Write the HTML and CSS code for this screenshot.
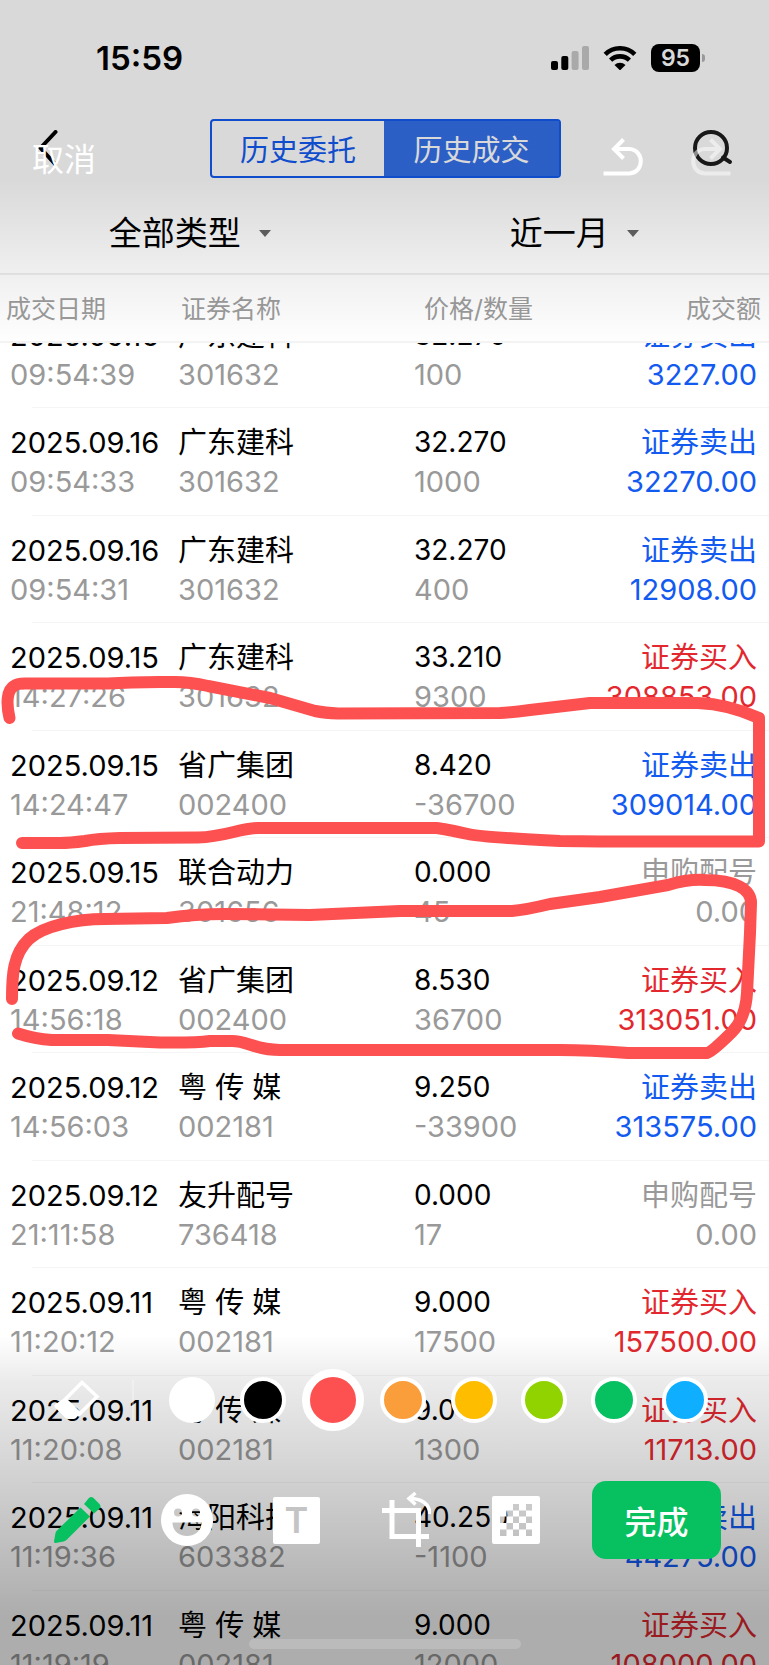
FILE: index.html
```html
<!DOCTYPE html>
<html lang="zh-CN">
<head>
<meta charset="utf-8">
<meta name="viewport" content="width=device-width, initial-scale=1">
<title>历史成交</title>
<link rel="stylesheet" href="styles.css">
</head>
<body>
<div class="screen">
  <main class="app">
    <div class="status">
      <span class="clock">15:59</span>
      <div class="status-icons">
        <svg width="38" height="24" viewBox="0 0 38 24" aria-hidden="true">
          <rect x="0" y="15" width="7" height="9" rx="2"/>
          <rect x="10.300" y="10" width="7" height="14" rx="2"/>
          <rect x="20.600" y="5" width="7" height="19" rx="2" fill="#000" fill-opacity=".22"/>
          <rect x="31" y="0" width="7" height="24" rx="2" fill="#000" fill-opacity=".22"/>
        </svg>
        <svg width="34" height="24" viewBox="0 0 34 24" aria-hidden="true">
          <g fill="none" stroke="#000" stroke-width="4.600">
            <path d="M2.200 8.400A21 21 0 0 1 31.800 8.400"/>
            <path d="M7.600 14.200A13.500 13.500 0 0 1 26.400 14.200"/>
          </g>
          <path d="M11.500 19A8 8 0 0 1 22.500 19L17 24.400Z"/>
        </svg>
        <span class="battery">95</span>
      </div>
    </div>

    <header class="nav">
      <button class="nav-btn" type="button" aria-label="返回">
        <svg width="20" height="36" viewBox="0 0 20 36"><path d="M17.500 2L2.500 18L17 34" fill="none" stroke="#000" stroke-width="4" stroke-linecap="round" stroke-linejoin="round"/></svg>
      </button>
      <div class="segment">
        <button type="button">历史委托</button>
        <button type="button" class="on">历史成交</button>
      </div>
      <button class="nav-btn" type="button" aria-label="搜索">
        <svg width="42" height="38" viewBox="0 0 42 38"><g fill="none" stroke="#1c1c1c" stroke-width="4"><circle cx="20" cy="19" r="16"/><path d="M32 28.500L39 33" stroke-linecap="round"/></g></svg>
      </button>
    </header>

    <div class="filters">
      <button type="button">全部类型<i class="caret"></i></button>
      <button type="button">近一月<i class="caret"></i></button>
    </div>

    <table class="deals">
      <thead><tr><th>成交日期</th><th>证券名称</th><th>价格/数量</th><th>成交额</th></tr></thead>
      <tbody>
        <tr><td>2025.09.16<small>09:54:39</small></td><td>广东建科<small>301632</small></td><td>32.270<small>100</small></td><td class="sell">证券卖出<b>3227.00</b></td></tr>
        <tr><td>2025.09.16<small>09:54:33</small></td><td>广东建科<small>301632</small></td><td>32.270<small>1000</small></td><td class="sell">证券卖出<b>32270.00</b></td></tr>
        <tr><td>2025.09.16<small>09:54:31</small></td><td>广东建科<small>301632</small></td><td>32.270<small>400</small></td><td class="sell">证券卖出<b>12908.00</b></td></tr>
        <tr><td>2025.09.15<small>14:27:26</small></td><td>广东建科<small>301632</small></td><td>33.210<small>9300</small></td><td class="buy">证券买入<b>308853.00</b></td></tr>
        <tr><td>2025.09.15<small>14:24:47</small></td><td>省广集团<small>002400</small></td><td>8.420<small>-36700</small></td><td class="sell">证券卖出<b>309014.00</b></td></tr>
        <tr><td>2025.09.15<small>21:48:12</small></td><td>联合动力<small>301656</small></td><td>0.000<small>45</small></td><td class="allot">申购配号<b>0.00</b></td></tr>
        <tr><td>2025.09.12<small>14:56:18</small></td><td>省广集团<small>002400</small></td><td>8.530<small>36700</small></td><td class="buy">证券买入<b>313051.00</b></td></tr>
        <tr><td>2025.09.12<small>14:56:03</small></td><td>粤 传 媒<small>002181</small></td><td>9.250<small>-33900</small></td><td class="sell">证券卖出<b>313575.00</b></td></tr>
        <tr><td>2025.09.12<small>21:11:58</small></td><td>友升配号<small>736418</small></td><td>0.000<small>17</small></td><td class="allot">申购配号<b>0.00</b></td></tr>
        <tr><td>2025.09.11<small>11:20:12</small></td><td>粤 传 媒<small>002181</small></td><td>9.000<small>17500</small></td><td class="buy">证券买入<b>157500.00</b></td></tr>
        <tr><td>2025.09.11<small>11:20:08</small></td><td>粤 传 媒<small>002181</small></td><td>9.010<small>1300</small></td><td class="buy">证券买入<b>11713.00</b></td></tr>
        <tr><td>2025.09.11<small>11:19:36</small></td><td>海阳科技<small>603382</small></td><td>40.250<small>-1100</small></td><td class="sell">证券卖出<b>44275.00</b></td></tr>
        <tr><td>2025.09.11<small>11:19:19</small></td><td>粤 传 媒<small>002181</small></td><td>9.000<small>12000</small></td><td class="buy">证券买入<b>108000.00</b></td></tr>
      </tbody>
    </table>
  </main>

  <svg class="marks" viewBox="0 0 769 1665" aria-hidden="true">
    <path d="M9.500 718C6 703 7 690 14 686Q17 683.500 25 683.500L108 683.500Q135 681.500 175 682Q190 682 208 686L270 698L315 711Q325 713 338 713.500L500 713Q512 712.500 530 710L590 703L698 703Q728 704 759 718L759 841.500L600 841.500L560 841Q480 837 468 834Q445 829 436 828L258 828C240 828 225 837 198 837.500L120 838Q98 838.500 85 841Q70 843 60 843L22 843"/>
    <path d="M12 999C12 975 13 954 29 939C43 926 76 919 105 919L167 918Q195 914 225 914L310 915L400 911L512 911Q525 910 550 904L600 897L668 885Q688 879 705 880C735 880 751 889 751 903L750 933L747 993C746 1010 740 1024 732 1032Q711 1053 707 1053L628 1053Q590 1050 560 1050L280 1050C255 1050 248 1041 232 1041L210 1041Q195 1043 160 1042.500L108 1040L52 1040Q35 1039 18 1033.500"/>
  </svg>

  <div class="editor">
    <div class="edit-top">
      <button class="cancel" type="button">取消</button>
      <button type="button" aria-label="撤销">
        <svg width="40" height="38" viewBox="0 0 40 38"><g fill="none" stroke="#fff" stroke-width="4"><path d="M20.500 1.500L11 11L20.500 20.500"/><path d="M12 11H26.500C41.500 12 41.500 34.500 26.500 35.500H.500"/></g></svg>
      </button>
      <button class="faded" type="button" aria-label="重做">
        <svg width="40" height="38" viewBox="0 0 40 38"><g fill="none" stroke="#fff" stroke-width="4"><path d="M19.500 1.500L29 11L19.500 20.500"/><path d="M28 11H13.500C-1.500 12 -1.500 34.500 13.500 35.500H39.500"/></g></svg>
      </button>
    </div>

    <div class="edit-bottom">
      <div class="palette">
        <button class="eraser" type="button" aria-label="橡皮擦">
          <svg width="46" height="40" viewBox="0 0 46 40"><path d="M28 2.500L43 16.500L25 34.500L10 20.500Z" fill="none" stroke="#fff" stroke-width="3.500"/><path d="M11.500 17.500L27 32.500L22 38Q21 39 19.500 39H14Q12.500 39 11.500 38L1 27.500Q0 26 1 24.500Z" fill="#fff"/></svg>
        </button>
        <span class="rule"></span>
        <div class="swatches">
          <input class="swatch white" type="radio" name="ink" aria-label="白色">
          <input class="swatch black" type="radio" name="ink" aria-label="黑色">
          <input class="swatch red" type="radio" name="ink" aria-label="红色" checked>
          <input class="swatch orange" type="radio" name="ink" aria-label="橙色">
          <input class="swatch yellow" type="radio" name="ink" aria-label="黄色">
          <input class="swatch lime" type="radio" name="ink" aria-label="浅绿">
          <input class="swatch green" type="radio" name="ink" aria-label="绿色">
          <input class="swatch blue" type="radio" name="ink" aria-label="蓝色">
        </div>
      </div>

      <div class="tools">
        <div class="tool-list">
          <button type="button" aria-label="画笔">
            <svg width="48" height="48" viewBox="0 0 48 48" fill="#07c160"><path d="M27.500 11.500L37 20.500L14 43.500Q12.500 45 10.500 45.500L2.500 47Q1 47 1 45.500L2.500 37Q2.800 35.500 4.500 34Z"/><path d="M31 8L35.500 2.500Q38 0 40.500 2L46.500 8Q48.500 10.500 46.500 12.500L41 17.500Z"/></svg>
          </button>
          <button type="button" aria-label="表情">
            <svg width="52" height="52" viewBox="0 0 52 52"><path fill="#fff" fill-rule="evenodd" d="M26 0A26 26 0 1 1 26 52A26 26 0 1 1 26 0ZM17 14.500A4 4 0 1 0 17 22.500A4 4 0 1 0 17 14.500ZM35 14.500A4 4 0 1 0 35 22.500A4 4 0 1 0 35 14.500ZM11.500 28.500H40.500C40.500 46.500 11.500 46.500 11.500 28.500Z"/></svg>
          </button>
          <button class="text-tool" type="button" aria-label="文字">T</button>
          <button type="button" aria-label="裁剪">
            <svg width="50" height="56" viewBox="0 0 50 56"><g fill="none" stroke="#fff" stroke-width="5"><path d="M11 8V44.500H48M1 18.500H37.500V55"/><path d="M29 6.500Q48 7 49 22" stroke-width="3.500"/><path d="M34.500 1L28 6.500L34.500 12.500" stroke-width="3.500"/></g></svg>
          </button>
          <button type="button" aria-label="马赛克">
            <svg width="48" height="48" viewBox="0 0 48 48"><path fill="#fff" fill-rule="evenodd" d="M2 0H46Q48 0 48 2V46Q48 48 46 48H2Q0 48 0 46V2Q0 0 2 0ZM21 8h6v6.500h-6ZM34 8h6v6.500h-6ZM14.500 14.500h6.500v6h-6.500ZM27 14.500h7v6h-7ZM8 20.500h6.500v6.500h-6.500ZM21 20.500h6v6.500h-6ZM34 20.500h6v6.500h-6ZM14.500 27h6.500v6.500h-6.500ZM27 27h7v6.500h-7ZM8 33.500h6.500v6.500h-6.500ZM21 33.500h6v6.500h-6ZM34 33.500h6v6.500h-6Z"/></svg>
          </button>
        </div>
        <button class="done" type="button">完成</button>
      </div>
      <span class="home"></span>
    </div>
  </div>
</div>
</body>
</html>
```
FILE: styles.css
```css
* {
  box-sizing: border-box;
}

body {
  margin: 0;
  background: #fff;
  color: #000;
  font-family: Inter, "Noto Sans CJK SC", sans-serif;
}

button {
  margin: 0;
  padding: 0;
  border: 0;
  background: none;
  color: inherit;
  font: inherit;
}

svg {
  display: block;
}

.screen {
  position: relative;
  height: 100vh;
  overflow: hidden;
}

.app {
  display: flex;
  flex-direction: column;
  height: 100%;
}

/* Status bar */
.status {
  display: flex;
  align-items: center;
  justify-content: space-between;
  height: 115px;
  padding: 0 64px 0 96px;
}

.clock {
  font-size: 33px;
  font-weight: 600;
}

.status-icons {
  display: flex;
  align-items: center;
  gap: 14px;
}

.battery {
  position: relative;
  width: 49px;
  margin-right: 5px;
  border-radius: 8px;
  background: #000;
  color: #fff;
  font-size: 23px;
  font-weight: 600;
  line-height: 28px;
  text-align: center;
}

.battery::after {
  content: "";
  position: absolute;
  top: 10px;
  right: -5px;
  width: 3px;
  height: 8px;
  border-radius: 0 3px 3px 0;
  background: #b4b4b4;
}

/* Navigation */
.nav {
  display: flex;
  align-items: center;
  justify-content: space-between;
  height: 66px;
  padding: 0 36px 0 38px;
}

.nav-btn {
  width: 42px;
}

.segment {
  display: flex;
  width: 351px;
  height: 59px;
  border: 2px solid #125af0;
  border-radius: 4px;
}

.segment button {
  flex: 1;
  color: #125af0;
  font-size: 29px;
}

.segment button:first-child {
  flex: 0 0 172px;
}

.segment .on {
  background: #3370e8;
  color: #fff;
}

/* Filters */
.filters {
  display: flex;
  height: 94px;
  padding-top: 8px;
  border-bottom: 2px solid #eee;
}

.filters button {
  display: flex;
  flex: 1;
  align-items: center;
  justify-content: center;
  gap: 18px;
  padding-right: 5px;
  font-size: 33px;
}

.caret {
  margin-top: 4px;
  border: 6px solid transparent;
  border-top: 7px solid #666;
  border-bottom: 0;
}

/* Deal list */
.deals {
  display: flex;
  flex: 1;
  flex-direction: column;
  min-height: 0;
}

.deals thead {
  display: block;
  padding: 0 8px 0 6px;
  border-bottom: 2px solid #f4f4f4;
}

.deals tr {
  display: grid;
  grid-template-columns: 168px 236px 1fr auto;
}

.deals thead tr {
  grid-template-columns: 175px 243px 1fr auto;
  height: 66px;
  padding-bottom: 3px;
  align-items: center;
}

.deals th,
.deals td {
  padding: 0;
  font-weight: 400;
  text-align: left;
  white-space: nowrap;
}

.deals th {
  color: #9c9c9c;
  font-size: 25px;
}

.deals tbody {
  display: block;
  flex: 1;
  min-height: 0;
  overflow: hidden;
}

.deals tbody tr {
  height: 107px;
  padding: 15px 12px 0 10px;
  background: linear-gradient(#f5f5f5, #f5f5f5) 32px 100% / 100% 1px no-repeat;
}

.deals tbody tr:nth-child(even) {
  height: 108px;
}

.deals tbody tr:first-child {
  margin-top: -42px;
}

.deals td {
  font-size: 29px;
  line-height: 39px;
}

.deals td:nth-child(3) {
  font-size: 28px;
}

.deals td:last-child,
.deals th:last-child {
  text-align: right;
}

.deals small,
.deals b {
  display: block;
  font-size: 29px;
  font-weight: 400;
}

.deals small,
.allot {
  color: #999;
}

.sell {
  color: #125af0;
}

.buy {
  color: #e2282e;
}

/* Hand-drawn marks */
.marks {
  position: absolute;
  top: 0;
  left: 0;
  width: 100%;
  fill: none;
  stroke: #fd5050;
  stroke-width: 12;
  stroke-linecap: round;
  stroke-linejoin: round;
}

/* Editing controls laid over the shot */
.editor {
  position: absolute;
  inset: 0;
  display: flex;
  flex-direction: column;
  justify-content: space-between;
}

.edit-top {
  display: flex;
  align-items: center;
  gap: 48px;
  height: 346px;
  padding: 0 38px 32px 32px;
  background: linear-gradient(rgba(0, 0, 0, .15) 52%, rgba(0, 0, 0, .07) 76%, rgba(0, 0, 0, .01) 96%, transparent);
}

.cancel {
  margin-right: auto;
  color: #fff;
  font-size: 32px;
}

.faded {
  opacity: .5;
}

.edit-bottom {
  padding: 34px 0 16px;
  background: linear-gradient(transparent, rgba(0, 0, 0, .08) 14%, rgba(0, 0, 0, .19) 46%, rgba(0, 0, 0, .32) 85%, rgba(0, 0, 0, .32));
}

.palette {
  display: flex;
  align-items: center;
  height: 62px;
  padding: 0 49px 0 22px;
}

.eraser {
  margin: 0 32px;
}

.rule {
  width: 2px;
  height: 40px;
  background: rgba(255, 255, 255, .3);
}

.swatches {
  display: grid;
  flex: 1;
  grid-template-columns: repeat(8, 1fr);
  align-items: center;
  justify-items: center;
  padding-left: 23px;
}

.swatch {
  appearance: none;
  width: 46px;
  height: 46px;
  margin: 0;
  border: 4px solid #fff;
  border-radius: 50%;
}

.swatch:checked {
  width: 62px;
  height: 62px;
  border-width: 8px;
}

.white { background: #fff; }
.black { background: #000; }
.red { background: #fd5050; }
.orange { background: #fa9d3b; }
.yellow { background: #ffbd00; }
.lime { background: #91d300; }
.green { background: #07c160; }
.blue { background: #10aeff; }

.tools {
  display: flex;
  gap: 21px;
  margin-top: 50px;
  padding: 0 48px 0 22px;
}

.tool-list {
  display: grid;
  flex: 1;
  grid-template-columns: repeat(5, 1fr);
  align-items: center;
  justify-items: center;
}

.text-tool {
  width: 47px;
  height: 47px;
  border-radius: 2px;
  background: #fff;
  color: #c4c4c4;
  font-size: 36px;
  font-weight: 600;
  line-height: 47px;
}

.done {
  width: 129px;
  height: 78px;
  border-radius: 14px;
  background: #07c160;
  color: #fff;
  font-size: 32px;
  font-weight: 500;
}

.home {
  display: block;
  width: 272px;
  height: 10px;
  margin: 80px auto 0;
  border-radius: 5px;
  background: rgba(255, 255, 255, .18);
}
```
